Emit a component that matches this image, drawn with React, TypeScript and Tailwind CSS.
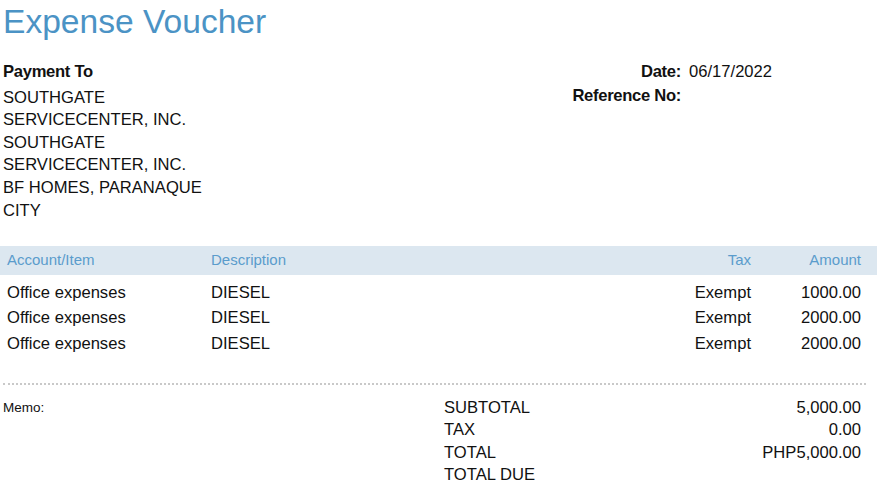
import React from "react";

const rows = [
  { item: "Office expenses", desc: "DIESEL", tax: "Exempt", amount: "1000.00" },
  { item: "Office expenses", desc: "DIESEL", tax: "Exempt", amount: "2000.00" },
  { item: "Office expenses", desc: "DIESEL", tax: "Exempt", amount: "2000.00" },
];

export default function App() {
  return (
    <div
      className="w-[877px] h-[487px] bg-white text-[#111] overflow-hidden"
      style={{ fontFamily: '"Liberation Sans", Arial, sans-serif' }}
    >
      <h1 className="pt-[3px] pl-[3px] text-[33.6px] leading-[38px] text-[#4b93c5] font-normal">
        Expense Voucher
      </h1>

      <div className="flex mt-[20px]">
        <div className="w-[570px] pl-[3px]">
          <div className="font-bold text-[16.6px] leading-[22.6px] mb-[3px] tracking-[-0.3px]">Payment To</div>
          <div className="w-[206px] text-[16.6px] leading-[22.6px]">
            SOUTHGATE SERVICECENTER, INC. SOUTHGATE SERVICECENTER, INC. BF HOMES, PARANAQUE CITY
          </div>
        </div>
        <div className="-mt-px text-[16.6px] leading-[24px]">
          <div className="flex">
            <div className="w-[111px] text-right font-bold tracking-[-0.3px]">Date:</div>
            <div className="pl-[8px]">06/17/2022</div>
          </div>
          <div className="flex">
            <div className="w-[111px] text-right font-bold tracking-[-0.3px]">Reference No:</div>
          </div>
        </div>
      </div>

      <div className="mt-[24px] grid grid-cols-[204px_1fr_100px_110px] pl-[7px] pr-[16px] h-[29px] items-center bg-[#dce7f0] text-[#5a9ccc] text-[15px]">
        <div>Account/Item</div>
        <div>Description</div>
        <div className="text-right">Tax</div>
        <div className="text-right">Amount</div>
      </div>

      <div className="pt-[5px]">
        {rows.map((r, i) => (
          <div
            key={i}
            className="grid grid-cols-[204px_1fr_100px_110px] pl-[7px] pr-[16px] h-[25.8px] items-center text-[16.6px]"
          >
            <div>{r.item}</div>
            <div>{r.desc}</div>
            <div className="text-right">{r.tax}</div>
            <div className="text-right">{r.amount}</div>
          </div>
        ))}
      </div>

      <div className="mt-[25px] ml-[3px] mr-[11px] border-t-2 border-dotted border-[#c9c9c9]" />

      <div className="flex mt-[12px]">
        <div className="w-[444px] pl-[3px] text-[13.5px] leading-[22.5px]">Memo:</div>
        <div className="flex-1 pr-[16px] text-[16.6px] leading-[22.5px]">
          <div className="flex justify-between">
            <span>SUBTOTAL</span>
            <span>5,000.00</span>
          </div>
          <div className="flex justify-between">
            <span>TAX</span>
            <span>0.00</span>
          </div>
          <div className="flex justify-between">
            <span>TOTAL</span>
            <span>PHP5,000.00</span>
          </div>
          <div className="flex justify-between">
            <span>TOTAL DUE</span>
            <span></span>
          </div>
        </div>
      </div>
    </div>
  );
}
